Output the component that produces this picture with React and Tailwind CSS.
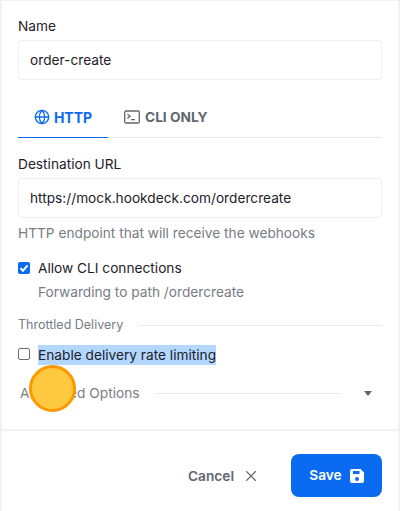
import React from "react";
import { Globe, X } from "lucide-react";

export default function App() {
  return (
    <div className="relative h-[511px] w-[400px] overflow-hidden bg-[#f0f1f5] pt-px px-[2px] font-['Inter',sans-serif] text-[13.7px] text-[#1d2129]">
      <div className="flex h-[510px] flex-col bg-white">
        <div className="flex flex-col px-4 pt-[15px]">
          <div className="h-5 leading-5">Name</div>
          <div className="mt-1 flex h-10 items-center rounded-[4px] border border-[#eceef2] px-[11px]">order-create</div>

          <div className="mt-[17px] flex h-[41px] border-b border-[#e9ebef] font-bold">
            <div className="-mb-px flex h-[41px] w-[90px] items-center justify-center gap-1 border-b border-[#0a6bf0] text-[#0a6bf0]">
              <Globe size={16} strokeWidth={2} />
              <span className="text-[14px]">HTTP</span>
            </div>
            <div className="flex h-10 items-center gap-[5px] pl-4 text-[#61666f]">
              <svg width="16" height="16" viewBox="0 0 16 16" fill="none" stroke="#61666f" strokeWidth="1.3">
                <rect x="0.7" y="2" width="14.6" height="12" rx="1.3" />
                <path d="M3.5 5.2 6 7.3 3.5 9.4M7 10.6h4" />
              </svg>
              <span>CLI ONLY</span>
            </div>
          </div>

          <div className="mt-4 h-5 leading-5">Destination URL</div>
          <div className="mt-1 flex h-10 items-center rounded-[4px] border border-[#eceef2] px-[11px] pt-[1px]">https://mock.hookdeck.com/ordercreate</div>
          <div className="mt-[5px] h-5 leading-5 text-[#777c85]">HTTP endpoint that will receive the webhooks</div>

          <div className="mt-[13px] flex h-6 items-center gap-2">
            <span className="flex h-3 w-3 items-center justify-center rounded-[2px] bg-[#0a6bf0]">
              <svg width="10" height="10" viewBox="0 0 10 10" fill="none" stroke="white" strokeWidth="2">
                <path d="M1.5 5.2 4 7.7 8.6 2.4" />
              </svg>
            </span>
            <span>Allow CLI connections</span>
          </div>
          <div className="mt-[2px] h-5 pl-5 leading-5 text-[#777c85]">Forwarding to path /ordercreate</div>

          <div className="mt-[13px] flex h-5 items-center gap-4 text-[12.5px] text-[#777c85]">
            <span>Throttled Delivery</span>
            <div className="h-px flex-1 bg-[#e9ebef]"></div>
          </div>

          <div className="mt-[10px] flex h-5 items-center gap-2">
            <span className="-mt-[2px] h-3 w-3 rounded-[2px] border border-[#6b6f76] bg-white"></span>
            <span className="bg-[#b3d7ff] leading-5">Enable delivery rate limiting</span>
          </div>

          <div className="mt-[18px] flex h-5 items-center pl-[2px] pr-[2px] text-[#777c85]">
            <span>Advanced Options</span>
            <div className="ml-4 h-px w-[186px] bg-[#e9ebef]"></div>
            <svg className="ml-auto mr-[8px]" width="8" height="5" viewBox="0 0 8 5" fill="#5f636b">
              <path d="M0 0h8L4 5z" />
            </svg>
          </div>
        </div>

        <div className="mt-[26px] flex flex-1 items-start justify-end border-t-2 border-[#f1f2f4] px-4 pt-[23px]">
          <div className="flex h-[43px] items-center gap-[8px] pr-[31px] pt-[1px] font-semibold text-[#61666f]">
            <span>Cancel</span>
            <X size={18} strokeWidth={1.5} />
          </div>
          <div className="flex h-[43px] w-[91px] items-center justify-center gap-2 rounded-[8px] bg-[#0a6bf0] font-semibold text-white">
            <span>Save</span>
            <svg width="14" height="14" viewBox="0 0 14 14" fill="white">
              <path fillRule="evenodd" d="M2 0h8.5L14 3.5V12a2 2 0 0 1-2 2H2a2 2 0 0 1-2-2V2a2 2 0 0 1 2-2zm1 2v3h6.5V2zm4 6a2 2 0 1 0 0 4 2 2 0 0 0 0-4z" />
            </svg>
          </div>
        </div>
      </div>
      <div className="absolute left-[29px] top-[365px] h-[47px] w-[47px] rounded-full border-[3px] border-[#ff9800] bg-[#ffc93f]"></div>
    </div>
  );
}
